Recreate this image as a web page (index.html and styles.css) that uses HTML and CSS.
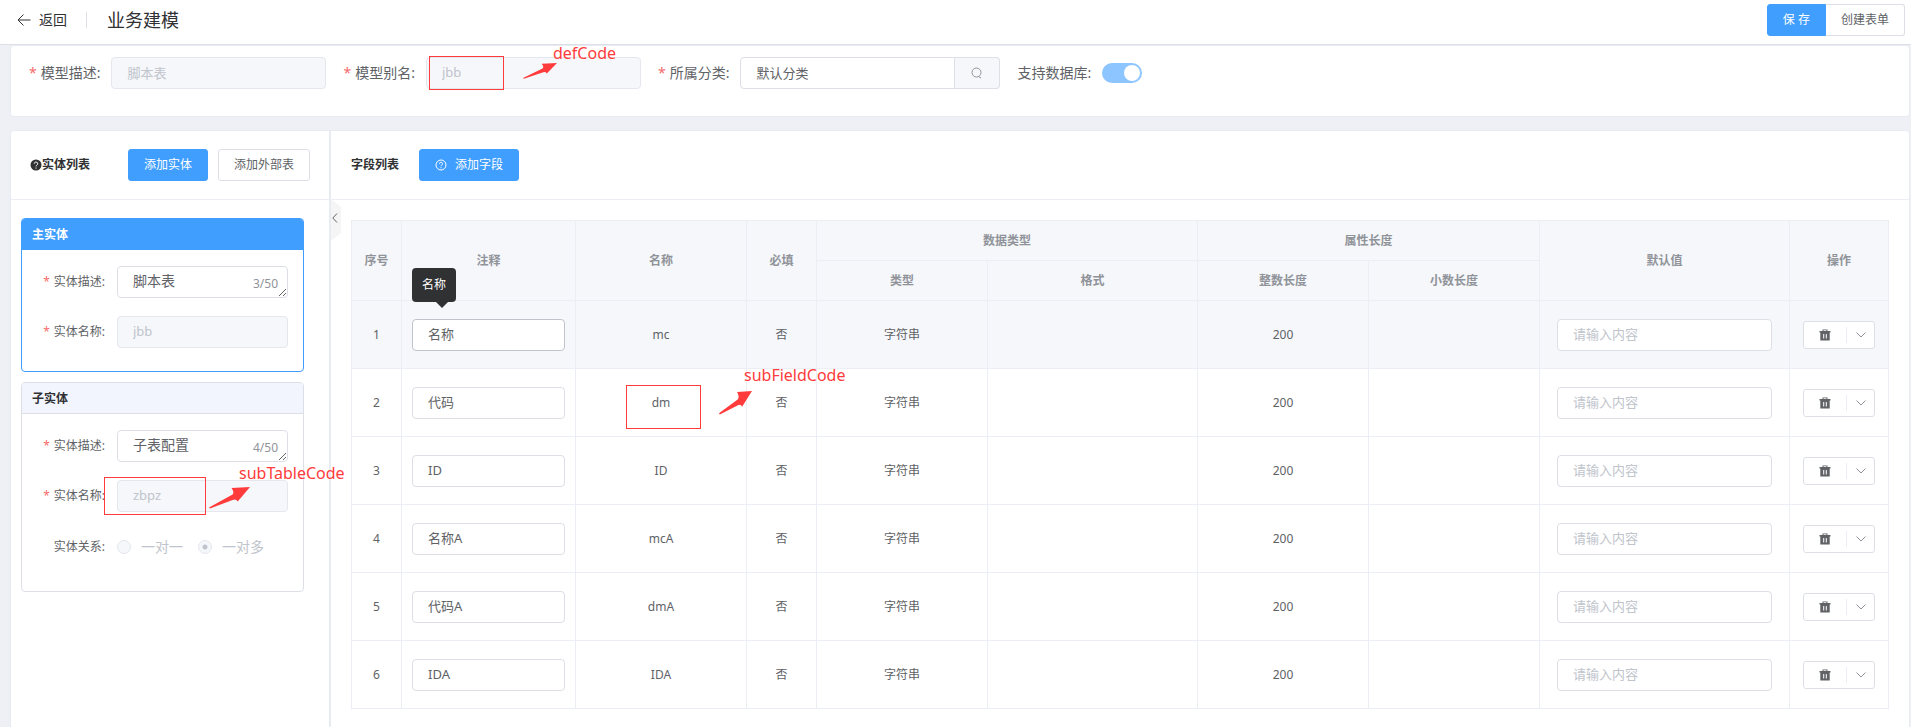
FILE: index.html
```html
<!doctype html>
<html lang="zh-CN">
  <head>
    <meta charset="utf-8" />
    <meta name="viewport" content="width=device-width, initial-scale=1" />
    <title>业务建模</title>
    <link rel="stylesheet" href="styles.css">
  </head>
  <body>
    <svg class="sprite" aria-hidden="true">
      <symbol id="arrow" viewBox="0 0 40 22" preserveAspectRatio="none">
        <path d="M0 20.500 23 7.500Q25 5.500 22 1L40 0 28 14.500Q26.500 11.500 23 13L1 21.500z" />
      </symbol>
      <symbol id="trash" viewBox="0 0 12 12">
        <path fill-rule="evenodd" d="M3.500.5h5v1.500h3v1.500h-.8v8H1.300v-8H.5V2h3zM4.500 1.300V2h3v-.7zM4.200 5v4.500h1V5zM6.800 5v4.500h1V5z" />
      </symbol>
      <symbol id="chevron" viewBox="0 0 12 12">
        <path d="M1.500 3.500 6 8l4.500-4.500" />
      </symbol>
    </svg>

    <header class="topbar">
      <a class="back" href="#">
        <svg class="back-icon" viewBox="0 0 14 14"><path d="M6.500 1.500 1 7l5.500 5.500M1 7h12.500" /></svg>
        返回
      </a>
      <h1>业务建模</h1>
      <div class="btn-group">
        <button type="button" class="btn primary save">保 存</button>
        <button type="button" class="btn">创建表单</button>
      </div>
    </header>

    <form class="card model-form">
      <div class="field">
        <label class="required" for="model-desc">模型描述:</label>
        <input id="model-desc" type="text" value="脚本表" disabled />
      </div>
      <div class="field">
        <label class="required" for="model-alias">模型别名:</label>
        <div class="marked">
          <input id="model-alias" type="text" value="jbb" disabled />
          <span class="mark mark-def"></span>
          <svg class="mark-arrow arrow-def"><use href="#arrow" /></svg>
          <span class="mark-text text-def">defCode</span>
        </div>
      </div>
      <div class="field">
        <label class="required" for="category">所属分类:</label>
        <div class="input-append">
          <input id="category" type="text" value="默认分类" />
          <button type="button" aria-label="搜索">
            <svg viewBox="0 0 14 14"><circle cx="6.500" cy="6.500" r="4.500" /><path d="M8.500 10.500l2.500 1.500" /></svg>
          </button>
        </div>
      </div>
      <div class="field">
        <label for="support-db">支持数据库:</label>
        <input id="support-db" class="switch" type="checkbox" checked disabled />
      </div>
    </form>

    <main class="card workspace">
      <aside class="entities">
        <div class="panel-head">
          <svg class="help-icon" viewBox="0 0 12 12"><circle cx="6" cy="6" r="5.500" /><path d="M4.300 4.700a1.700 1.700 0 1 1 2.500 1.500q-.8.4-.8 1.200M6 8.500v1.200" /></svg>
          <h2>实体列表</h2>
          <button type="button" class="btn primary add-entity">添加实体</button>
          <button type="button" class="btn">添加外部表</button>
        </div>
        <div class="entity-list">
          <section class="entity active">
            <h3>主实体</h3>
            <div class="entity-body">
              <div class="entity-row">
                <label class="required" for="main-desc">实体描述:</label>
                <div class="counted">
                  <textarea id="main-desc" rows="1">脚本表</textarea>
                  <span class="count">3/50</span>
                </div>
              </div>
              <div class="entity-row">
                <label class="required" for="main-name">实体名称:</label>
                <input id="main-name" type="text" value="jbb" disabled />
              </div>
            </div>
          </section>
          <section class="entity">
            <h3>子实体</h3>
            <div class="entity-body">
              <div class="entity-row">
                <label class="required" for="sub-desc">实体描述:</label>
                <div class="counted">
                  <textarea id="sub-desc" rows="1">子表配置</textarea>
                  <span class="count">4/50</span>
                </div>
              </div>
              <div class="entity-row marked">
                <label class="required" for="sub-name">实体名称:</label>
                <input id="sub-name" type="text" value="zbpz" disabled />
                <span class="mark mark-table"></span>
                <svg class="mark-arrow arrow-table"><use href="#arrow" /></svg>
                <span class="mark-text text-table">subTableCode</span>
              </div>
              <div class="entity-row relation" role="radiogroup" aria-label="实体关系">
                <span class="label">实体关系:</span>
                <label class="radio"><input type="radio" name="relation" disabled />一对一</label>
                <label class="radio"><input type="radio" name="relation" checked disabled />一对多</label>
              </div>
            </div>
          </section>
        </div>
      </aside>

      <section class="fields">
        <div class="panel-head">
          <h2>字段列表</h2>
          <button type="button" class="btn primary add-field">
            <svg viewBox="0 0 12 12"><circle cx="6" cy="6" r="5" /><path d="M4.500 4.800a1.500 1.500 0 1 1 2.200 1.300q-.7.4-.7 1.100M6 8.200v1" /></svg>
            添加字段
          </button>
        </div>
        <button type="button" class="collapse" aria-label="收起">
          <svg viewBox="0 0 6 10"><path d="M5 .5.800 5 5 9.500" /></svg>
        </button>
        <div class="table-wrap">
          <table>
            <colgroup>
              <col class="c-index">
              <col class="c-comment">
              <col class="c-name">
              <col class="c-required">
              <col class="c-type">
              <col class="c-format">
              <col class="c-int">
              <col class="c-decimal">
              <col class="c-default">
              <col class="c-action">
            </colgroup>
            <thead>
              <tr>
                <th rowspan="2">序号</th>
                <th rowspan="2">注释</th>
                <th rowspan="2">名称</th>
                <th rowspan="2">必填</th>
                <th colspan="2">数据类型</th>
                <th colspan="2">属性长度</th>
                <th rowspan="2">默认值</th>
                <th rowspan="2">操作</th>
              </tr>
              <tr>
                <th>类型</th>
                <th>格式</th>
                <th>整数长度</th>
                <th>小数长度</th>
              </tr>
            </thead>
            <tbody>
              <tr class="hover">
                <td>1</td>
                <td>
                  <div class="marked">
                    <input type="text" value="名称" aria-label="注释" />
                    <span class="tooltip" role="tooltip">名称</span>
                  </div>
                </td>
                <td>mc</td>
                <td>否</td>
                <td>字符串</td>
                <td></td>
                <td>200</td>
                <td></td>
                <td><input class="default" type="text" placeholder="请输入内容" aria-label="默认值" /></td>
                <td>
                  <div class="split">
                    <button type="button" aria-label="删除"><svg class="trash"><use href="#trash" /></svg></button>
                    <button type="button" aria-label="更多"><svg class="chevron"><use href="#chevron" /></svg></button>
                  </div>
                </td>
              </tr>
              <tr>
                <td>2</td>
                <td><input type="text" value="代码" aria-label="注释" /></td>
                <td>
                  <div class="marked">
                    dm
                    <span class="mark mark-field"></span>
                    <svg class="mark-arrow arrow-field"><use href="#arrow" /></svg>
                    <span class="mark-text text-field">subFieldCode</span>
                  </div>
                </td>
                <td>否</td>
                <td>字符串</td>
                <td></td>
                <td>200</td>
                <td></td>
                <td><input class="default" type="text" placeholder="请输入内容" aria-label="默认值" /></td>
                <td>
                  <div class="split">
                    <button type="button" aria-label="删除"><svg class="trash"><use href="#trash" /></svg></button>
                    <button type="button" aria-label="更多"><svg class="chevron"><use href="#chevron" /></svg></button>
                  </div>
                </td>
              </tr>
              <tr>
                <td>3</td>
                <td><input type="text" value="ID" aria-label="注释" /></td>
                <td>ID</td>
                <td>否</td>
                <td>字符串</td>
                <td></td>
                <td>200</td>
                <td></td>
                <td><input class="default" type="text" placeholder="请输入内容" aria-label="默认值" /></td>
                <td>
                  <div class="split">
                    <button type="button" aria-label="删除"><svg class="trash"><use href="#trash" /></svg></button>
                    <button type="button" aria-label="更多"><svg class="chevron"><use href="#chevron" /></svg></button>
                  </div>
                </td>
              </tr>
              <tr>
                <td>4</td>
                <td><input type="text" value="名称A" aria-label="注释" /></td>
                <td>mcA</td>
                <td>否</td>
                <td>字符串</td>
                <td></td>
                <td>200</td>
                <td></td>
                <td><input class="default" type="text" placeholder="请输入内容" aria-label="默认值" /></td>
                <td>
                  <div class="split">
                    <button type="button" aria-label="删除"><svg class="trash"><use href="#trash" /></svg></button>
                    <button type="button" aria-label="更多"><svg class="chevron"><use href="#chevron" /></svg></button>
                  </div>
                </td>
              </tr>
              <tr>
                <td>5</td>
                <td><input type="text" value="代码A" aria-label="注释" /></td>
                <td>dmA</td>
                <td>否</td>
                <td>字符串</td>
                <td></td>
                <td>200</td>
                <td></td>
                <td><input class="default" type="text" placeholder="请输入内容" aria-label="默认值" /></td>
                <td>
                  <div class="split">
                    <button type="button" aria-label="删除"><svg class="trash"><use href="#trash" /></svg></button>
                    <button type="button" aria-label="更多"><svg class="chevron"><use href="#chevron" /></svg></button>
                  </div>
                </td>
              </tr>
              <tr>
                <td>6</td>
                <td><input type="text" value="IDA" aria-label="注释" /></td>
                <td>IDA</td>
                <td>否</td>
                <td>字符串</td>
                <td></td>
                <td>200</td>
                <td></td>
                <td><input class="default" type="text" placeholder="请输入内容" aria-label="默认值" /></td>
                <td>
                  <div class="split">
                    <button type="button" aria-label="删除"><svg class="trash"><use href="#trash" /></svg></button>
                    <button type="button" aria-label="更多"><svg class="chevron"><use href="#chevron" /></svg></button>
                  </div>
                </td>
              </tr>
            </tbody>
          </table>
        </div>
      </section>
    </main>
  </body>
</html>
```
FILE: styles.css
```css
* {
  box-sizing: border-box;
}
body {
  margin: 0;
  min-height: 100vh;
  display: flex;
  flex-direction: column;
  background: #eff0f5;
  color: #606266;
  font-family: "Noto Sans", "Noto Sans CJK SC", sans-serif;
  font-size: 12px;
  line-height: 20px;
}
h1,
h2,
h3 {
  margin: 0;
  color: #303133;
}
svg {
  display: block;
  flex: none;
}
button {
  font: inherit;
  cursor: pointer;
}
.sprite {
  display: none;
}

/* form controls */
input[type="text"],
textarea {
  display: block;
  width: 100%;
  height: 32px;
  padding: 0 15px 2px;
  border: 1px solid #dcdfe6;
  border-radius: 4px;
  background: #fff;
  color: #606266;
  font: inherit;
  font-size: 13px;
}
input[type="text"]:disabled {
  background: #f5f7fa;
  border-color: #e4e7ed;
  color: #c0c4cc;
}
input::placeholder {
  color: #c0c4cc;
}
.required::before {
  content: "*";
  margin-right: 4px;
  color: #f56c6c;
}
.btn {
  height: 32px;
  padding: 0 15px;
  border: 1px solid #dcdfe6;
  border-radius: 3px;
  background: #fff;
  color: #606266;
}
.btn.primary {
  background: #409eff;
  border-color: #409eff;
  color: #fff;
}

/* top bar */
.topbar {
  display: flex;
  align-items: center;
  height: 45px;
  padding: 0 6px 4px 17px;
  background: #fff;
  border-bottom: 1px solid #dcdfe6;
}
.back {
  display: flex;
  align-items: center;
  gap: 8px;
  height: 16px;
  padding-right: 19px;
  border-right: 1px solid #dcdfe6;
  color: #303133;
  font-size: 14px;
  text-decoration: none;
}
.back-icon {
  width: 14px;
  height: 14px;
  fill: none;
  stroke: #303133;
}
h1 {
  margin-left: 20px;
  font-size: 18px;
  font-weight: 400;
}
.btn-group {
  display: flex;
  margin-left: auto;
}
.btn-group .save {
  border-radius: 3px 0 0 3px;
}
.btn-group .btn:last-child {
  border-left: 0;
  border-radius: 0 3px 3px 0;
}

.card {
  margin: 0 1px 0 10px;
  background: #fff;
  border: 1px solid #e9ebf3;
  border-radius: 4px;
}

/* model form */
.model-form {
  display: flex;
  align-items: flex-start;
  gap: 17px;
  height: 72px;
  padding: 11px 18px;
}
.field {
  display: flex;
  align-items: center;
  gap: 11px;
  height: 32px;
  font-size: 14px;
}
.field input[type="text"] {
  width: 215px;
}
.marked {
  position: relative;
}
.input-append {
  display: flex;
}
.input-append input[type="text"] {
  border-radius: 4px 0 0 4px;
}
.input-append button {
  display: flex;
  align-items: center;
  justify-content: center;
  width: 45px;
  border: 1px solid #dcdfe6;
  border-left: 0;
  border-radius: 0 4px 4px 0;
  background: #f5f7fa;
}
.input-append svg {
  width: 14px;
  height: 14px;
  fill: none;
  stroke: #909399;
}
.switch {
  appearance: none;
  width: 40px;
  height: 20px;
  margin: 0;
  padding: 2px;
  border-radius: 10px;
  background: #8cc5ff;
}
.switch::before {
  content: "";
  display: block;
  width: 16px;
  height: 16px;
  margin-left: auto;
  border-radius: 50%;
  background: #fff;
}

/* workspace */
.workspace {
  display: flex;
  flex: 1;
  margin-top: 13px;
  border-bottom: 0;
  border-radius: 4px 4px 0 0;
}
.panel-head {
  display: flex;
  align-items: center;
  height: 69px;
  border-bottom: 1px solid #ebeef5;
}
h2 {
  font-size: 12px;
}
.entities {
  flex: none;
  width: 320px;
  border-right: 2px solid #e9ebf3;
}
.entities .panel-head {
  padding: 0 19px;
}
.help-icon {
  width: 12px;
  height: 12px;
  fill: #303133;
}
.help-icon path {
  fill: none;
  stroke: #fff;
}
.add-entity {
  margin: 0 10px 0 auto;
}
.entity-list {
  display: flex;
  flex-direction: column;
  gap: 10px;
  padding: 18px 25px 0 10px;
}
.entity {
  border: 1px solid #dcdfe6;
  border-radius: 4px;
}
.entity h3 {
  height: 31px;
  padding: 0 10px;
  border-bottom: 1px solid #dcdfe6;
  border-radius: 3px 3px 0 0;
  background: #f2f5fd;
  font-size: 12px;
  line-height: 32px;
}
.entity.active,
.entity.active h3 {
  border-color: #409eff;
}
.entity.active h3 {
  background: #409eff;
  color: #fff;
}
.entity-body {
  display: flex;
  flex-direction: column;
  gap: 18px;
  padding: 16px 15px 23px;
}
.entity-row {
  display: flex;
  align-items: center;
  height: 32px;
}
.entity-row.relation {
  height: 34px;
  margin-bottom: 4px;
}
.entity-row > label:first-child,
.label {
  flex: none;
  width: 68px;
  margin-right: 12px;
  text-align: right;
}
.entity-row > label.radio {
  display: flex;
  align-items: center;
  gap: 10px;
  margin-right: 15px;
  color: #c0c4cc;
  font-size: 14px;
}
.radio input {
  appearance: none;
  width: 14px;
  height: 14px;
  margin: 0;
  border: 1px solid #e4e7ed;
  border-radius: 50%;
  background: #f5f7fa;
}
.radio input:checked {
  background: radial-gradient(circle, #c0c4cc 2px, #f5f7fa 3px);
}
.counted {
  position: relative;
  flex: 1;
}
textarea {
  padding: 4px 15px;
  font-size: 14px;
  overflow: hidden;
}
.count {
  position: absolute;
  right: 10px;
  bottom: 4px;
  color: #909399;
}

/* field list */
.fields {
  position: relative;
  flex: 1;
  min-width: 0;
}
.fields .panel-head {
  gap: 20px;
  padding: 0 20px;
}
.add-field {
  display: flex;
  align-items: center;
  gap: 8px;
}
.add-field svg {
  width: 12px;
  height: 12px;
  fill: none;
  stroke: #fff;
}
.collapse {
  position: absolute;
  top: 68px;
  left: 0;
  width: 10px;
  height: 42px;
  padding: 0 1px 4px;
  border: 0;
  background: #f5f5f5;
  clip-path: polygon(0 0, 100% 8px, 100% 34px, 0 100%);
}
.collapse svg {
  width: 6px;
  height: 10px;
  fill: none;
  stroke: #606266;
}
.table-wrap {
  padding: 20px 20px 18px;
}
table {
  width: 100%;
  table-layout: fixed;
  border-spacing: 0;
  border-top: 1px solid #ebeef5;
  border-left: 1px solid #ebeef5;
}
.c-index {
  width: 50px;
}
.c-comment {
  width: 174px;
}
.c-required {
  width: 70px;
}
.c-format {
  width: 210px;
}
.c-default {
  width: 250px;
}
.c-action {
  width: 99px;
}
th,
td {
  padding: 0 10px;
  border-right: 1px solid #ebeef5;
  border-bottom: 1px solid #ebeef5;
  text-align: center;
}
th {
  height: 40px;
  background: #f5f7fa;
  color: #909399;
}
td {
  height: 68px;
}
.hover td {
  background: #f5f7fa;
}
.hover .marked input {
  border-color: #c0c4cc;
}
td input.default[type="text"] {
  width: 215px;
  margin: 0 auto;
}
.split {
  display: flex;
  align-items: center;
  width: 72px;
  height: 28px;
  margin: 0 auto;
  border: 1px solid #dcdfe6;
  border-radius: 3px;
  background: #fff;
}
.split button {
  display: flex;
  align-items: center;
  justify-content: center;
  flex: 1;
  height: 16px;
  padding: 0;
  border: 0;
  background: none;
}
.split button:first-child {
  flex: none;
  width: 43px;
  border-right: 1px solid #ebeef5;
}
.trash,
.chevron {
  width: 12px;
  height: 12px;
}
.trash {
  fill: #606266;
}
.chevron {
  fill: none;
  stroke: #909399;
}

.tooltip {
  position: absolute;
  left: 0;
  bottom: 49px;
  height: 34px;
  padding: 0 10px;
  border-radius: 4px;
  background: #303133;
  color: #fff;
  line-height: 34px;
}
.tooltip::after {
  content: "";
  position: absolute;
  top: 34px;
  left: 24px;
  border: 6px solid transparent;
  border-top-color: #303133;
  border-bottom: 0;
}

/* red annotations */
.mark,
.mark-arrow,
.mark-text {
  position: absolute;
  z-index: 1;
}
.mark {
  border: 1px solid #ff3b3b;
}
.mark-arrow {
  fill: #ff3b3b;
}
.mark-text {
  color: #ff3b3b;
  font-size: 16px;
  line-height: 20px;
}
.mark-def {
  top: -1px;
  left: 3px;
  width: 75px;
  height: 34px;
}
.arrow-def {
  top: 6px;
  left: 97px;
  width: 34px;
  height: 16px;
}
.text-def {
  top: -14px;
  left: 127px;
}
.mark-table {
  top: -3px;
  left: 67px;
  width: 102px;
  height: 38px;
}
.arrow-table {
  top: 7px;
  left: 172px;
  width: 41px;
  height: 22px;
}
.text-table {
  top: -17px;
  left: 202px;
}
.mark-field {
  top: -8px;
  left: 40px;
  width: 75px;
  height: 44px;
}
.arrow-field {
  top: -2px;
  left: 133px;
  width: 33px;
  height: 24px;
}
.text-field {
  top: -28px;
  left: 158px;
}
```
